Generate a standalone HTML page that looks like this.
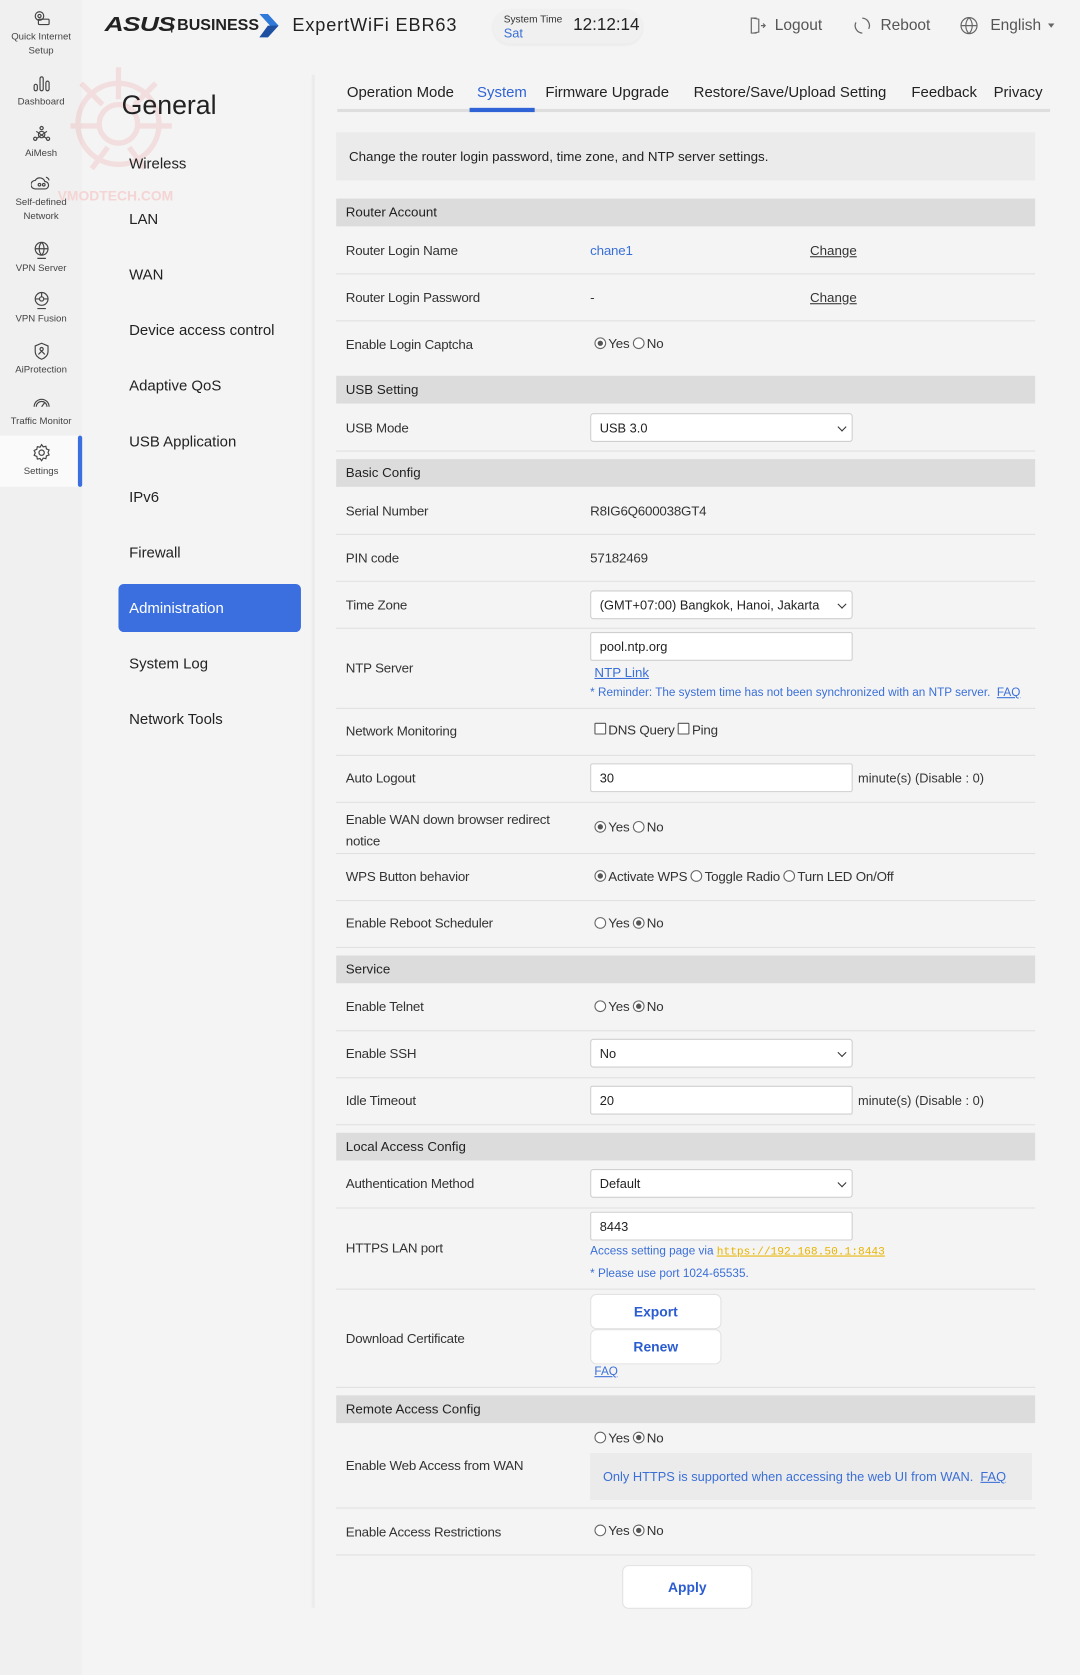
<!DOCTYPE html>
<html><head><meta charset="utf-8">
<style>
html,body{margin:0;padding:0;width:1080px;height:1674px;overflow:hidden;background:#f4f4f4;}
#w{position:absolute;left:0;top:0;width:1012px;height:1569px;transform:scale(1.0672,1.0676);transform-origin:0 0;font-family:"Liberation Sans",sans-serif;color:#333;background:#f4f4f4;}
.a{position:absolute;white-space:nowrap;}
.side{position:absolute;left:0;top:0;width:77px;height:1569px;background:#f0f0f0;}
.si{position:absolute;left:0;width:77px;text-align:center;font-size:9px;color:#444;line-height:13px;}
.si svg{display:block;margin:0 auto 2px;}
.menu{position:absolute;left:121px;font-size:14px;color:#222;}
.lbl{position:absolute;left:324px;font-size:12.5px;color:#333;letter-spacing:-0.2px;}
.val{position:absolute;left:553px;font-size:12.5px;color:#333;letter-spacing:-0.2px;}
.sep{position:absolute;left:315px;width:655px;height:1px;background:#e0e0e0;}
.hdr{position:absolute;left:315px;width:655px;height:26px;background:#dcdcdc;font-size:12.5px;color:#222;line-height:26px;text-indent:9px;}
.inp{position:absolute;left:553px;width:246px;height:27px;background:#fff;border:1px solid #cfcfcf;border-radius:2px;font-size:12px;line-height:27px;text-indent:8px;color:#222;box-sizing:border-box;}
.sel{border-radius:3px;}
.sel:after{content:"";position:absolute;right:6px;top:9px;width:5px;height:5px;border-right:1.6px solid #333;border-bottom:1.6px solid #333;transform:rotate(45deg);}
.r{display:inline-block;width:9px;height:9px;border:1px solid #666;border-radius:50%;vertical-align:-1px;margin-right:2px;position:relative;background:#fff;}
.r.c:after{content:"";position:absolute;left:2px;top:2px;width:5px;height:5px;border-radius:50%;background:#555;}
.cb{display:inline-block;width:9px;height:9px;border:1px solid #555;border-radius:1px;vertical-align:0px;margin-right:2px;background:#fff;}
.blue{color:#3a6fd8;}
.btn{position:absolute;background:#fff;border:1px solid #e2e2e2;border-radius:6px;text-align:center;color:#2b5cd0;font-weight:bold;font-size:13px;}
</style></head><body><div id="w">

<div class="side"></div>
<div class="a" style="left:0;top:408px;width:73px;height:48px;background:#fafafa"></div>
<div class="a" style="left:73px;top:408px;width:4px;height:48px;background:#3b6fe0;border-radius:2px"></div>

<div class="si" style="top:8px"><svg width="18" height="18" viewBox="0 0 18 18" fill="none" stroke="#444" stroke-width="1.1"><circle cx="7" cy="7" r="4"/><circle cx="7" cy="7" r="1.5"/><rect x="6" y="10" width="10" height="5" rx="1"/></svg>Quick Internet<br>Setup</div>
<div class="si" style="top:69px"><svg width="18" height="18" viewBox="0 0 18 18" fill="none" stroke="#444" stroke-width="1.1"><rect x="2" y="10" width="3" height="6" rx="1.5"/><rect x="7.5" y="3" width="3" height="13" rx="1.5"/><rect x="13" y="7" width="3" height="9" rx="1.5"/></svg>Dashboard</div>
<div class="si" style="top:117px"><svg width="18" height="18" viewBox="0 0 18 18" fill="none" stroke="#444" stroke-width="1.1"><circle cx="9" cy="9" r="3"/><circle cx="9" cy="3" r="1.5"/><circle cx="3" cy="13" r="1.5"/><circle cx="15" cy="13" r="1.5"/><path d="M4 6l10 7M14 6L4 13"/></svg>AiMesh</div>
<div class="si" style="top:163px"><svg width="20" height="18" viewBox="0 0 20 18" fill="none" stroke="#444" stroke-width="1.1"><path d="M4 14a4 4 0 010-8 5 5 0 019 1 3.5 3.5 0 010 7z"/><circle cx="8" cy="10" r="1.2"/><circle cx="12" cy="10" r="1.2"/><path d="M14 3a4 4 0 013 3"/></svg>Self-defined<br>Network</div>
<div class="si" style="top:225px"><svg width="18" height="18" viewBox="0 0 18 18" fill="none" stroke="#444" stroke-width="1.1"><circle cx="9" cy="8" r="6"/><path d="M3 8h12M9 2c-3 3-3 9 0 12M9 2c3 3 3 9 0 12M5 17h8"/></svg>VPN Server</div>
<div class="si" style="top:272px"><svg width="18" height="18" viewBox="0 0 18 18" fill="none" stroke="#444" stroke-width="1.1"><circle cx="9" cy="8" r="6"/><circle cx="9" cy="8" r="2"/><path d="M3 8h4M11 8h4M9 2v4M5 17h8"/></svg>VPN Fusion</div>
<div class="si" style="top:320px"><svg width="18" height="18" viewBox="0 0 18 18" fill="none" stroke="#444" stroke-width="1.1"><path d="M9 1.5l6 2.5v5c0 4-3 6.5-6 7.5-3-1-6-3.5-6-7.5V4z"/><circle cx="9" cy="7" r="1.5"/><path d="M6 12l3-3 3 3"/></svg>AiProtection</div>
<div class="si" style="top:368px"><svg width="18" height="18" viewBox="0 0 18 18" fill="none" stroke="#444" stroke-width="1.1"><path d="M2 13a7 7 0 0114 0"/><path d="M4 13a5 5 0 0110 0M9 13l3-4"/></svg>Traffic Monitor</div>
<div class="si" style="top:415px"><svg width="18" height="18" viewBox="0 0 18 18" fill="none" stroke="#444" stroke-width="1.1"><circle cx="9" cy="9" r="2.5"/><path d="M9 1.5l1.5 2 2.5-.5.5 2.5 2.5 1-1 2.3 1 2.3-2.5 1-.5 2.5-2.5-.5L9 16.5l-1.5-2-2.5.5-.5-2.5-2.5-1 1-2.3-1-2.3 2.5-1 .5-2.5 2.5.5z"/></svg>Settings</div>

<!-- header -->
<div class="a" style="left:98px;top:13px;font-size:19px;font-weight:bold;font-style:italic;color:#222;letter-spacing:-0.5px;transform:scaleX(1.3);transform-origin:0 0">ASUS</div>
<div class="a" style="left:159px;top:14px;font-size:15px;color:#222">|</div>
<div class="a" style="left:166px;top:15px;font-size:15px;font-weight:bold;color:#222">BUSINESS</div>
<svg class="a" style="left:243px;top:13px" width="18" height="22" viewBox="0 0 18 22"><path d="M0 0h8l10 11-10 11H0l10-11z" fill="#2f7ad8"/><path d="M8 11h10L8 22H0z" fill="#1f4fa0"/></svg>
<div class="a" style="left:274px;top:14px;font-size:17px;color:#222;letter-spacing:0.8px">ExpertWiFi EBR63</div>
<div class="a" style="left:462px;top:9px;width:140px;height:32px;border-radius:16px;background:#f0f0f0;box-shadow:0 1px 3px rgba(0,0,0,.06)"></div>
<div class="a" style="left:472px;top:13px;font-size:9.5px;color:#333">System Time</div>
<div class="a" style="left:472px;top:24px;font-size:12px;color:#3a6fd8">Sat</div>
<div class="a" style="left:537px;top:15px;font-size:16px;color:#222">12:12:14</div>
<svg class="a" style="left:702px;top:15px" width="16" height="18" viewBox="0 0 16 18" fill="none" stroke="#666" stroke-width="1.1"><path d="M7 2H2v14h5M4 2l5 1v12l-5 1M11 9h4M13 7l2 2-2 2"/></svg>
<div class="a" style="left:726px;top:16px;font-size:14.5px;color:#555">Logout</div>
<svg class="a" style="left:799px;top:15px" width="18" height="18" viewBox="0 0 18 18" fill="none" stroke="#666" stroke-width="1.2"><path d="M9 2a7 7 0 016 10M9 16A7 7 0 013 6"/></svg>
<div class="a" style="left:825px;top:16px;font-size:14.5px;color:#555">Reboot</div>
<svg class="a" style="left:899px;top:15px" width="18" height="18" viewBox="0 0 18 18" fill="none" stroke="#666" stroke-width="1.1"><circle cx="9" cy="9" r="7.5"/><path d="M1.5 9h15M9 1.5c-4 4-4 11 0 15M9 1.5c4 4 4 11 0 15"/></svg>
<div class="a" style="left:928px;top:16px;font-size:14.5px;color:#555">English</div>
<div class="a" style="left:982px;top:22px;width:0;height:0;border-left:3.5px solid transparent;border-right:3.5px solid transparent;border-top:4px solid #666"></div>

<!-- watermark -->
<svg class="a" style="left:56px;top:58px;opacity:.2" width="120" height="125" viewBox="0 0 120 125" fill="none" stroke="#e88" stroke-width="5"><circle cx="55" cy="58" r="38"/><circle cx="55" cy="58" r="18"/><path d="M55 5v30M20 20l20 20M90 20L70 40M10 60h25M75 60h30M30 100l15-20M80 100L65 80"/></svg>
<div class="a" style="left:54px;top:176px;font-size:13px;font-weight:bold;color:#f5d4d4">VMODTECH.COM</div>

<!-- left menu -->
<div class="a" style="left:114px;top:85px;font-size:25px;color:#222">General</div>
<div class="menu" style="top:145px">Wireless</div>
<div class="menu" style="top:197px">LAN</div>
<div class="menu" style="top:249px">WAN</div>
<div class="menu" style="top:301px">Device access control</div>
<div class="menu" style="top:353px">Adaptive QoS</div>
<div class="menu" style="top:405px">USB Application</div>
<div class="menu" style="top:457px">IPv6</div>
<div class="menu" style="top:509px">Firewall</div>
<div class="a" style="left:111px;top:547px;width:171px;height:45px;background:#3b6fe0;border-radius:5px"></div>
<div class="menu" style="top:561px;color:#fff">Administration</div>
<div class="menu" style="top:613px">System Log</div>
<div class="menu" style="top:665px">Network Tools</div>
<div class="a" style="left:292px;top:70px;width:3px;height:1436px;background:#ececec"></div>

<!-- tabs -->
<div class="a" style="left:325px;top:78px;font-size:14px;color:#222">Operation Mode</div>
<div class="a" style="left:447px;top:78px;font-size:14px;color:#2f63d6">System</div>
<div class="a" style="left:511px;top:78px;font-size:14px;color:#222">Firmware Upgrade</div>
<div class="a" style="left:650px;top:78px;font-size:14px;color:#222">Restore/Save/Upload Setting</div>
<div class="a" style="left:854px;top:78px;font-size:14px;color:#222">Feedback</div>
<div class="a" style="left:931px;top:78px;font-size:14px;color:#222">Privacy</div>
<div class="a" style="left:316px;top:102px;width:668px;height:3px;background:#dedede"></div>
<div class="a" style="left:440px;top:101px;width:61px;height:4px;background:#2f63d6"></div>

<div class="a" style="left:315px;top:124px;width:655px;height:45px;background:#ebebeb"></div>
<div class="a" style="left:327px;top:140px;font-size:12.5px;color:#222">Change the router login password, time zone, and NTP server settings.</div>

<div class="hdr" style="top:186px">Router Account</div>
<div class="lbl" style="top:228px">Router Login Name</div><div class="val blue" style="top:228px">chane1</div><div class="a" style="left:759px;top:228px;font-size:12.5px;text-decoration:underline">Change</div>
<div class="sep" style="top:256px"></div>
<div class="lbl" style="top:272px">Router Login Password</div><div class="val" style="top:272px">-</div><div class="a" style="left:759px;top:272px;font-size:12.5px;text-decoration:underline">Change</div>
<div class="sep" style="top:300px"></div>
<div class="lbl" style="top:316px">Enable Login Captcha</div><div class="val" style="top:315px;left:557px"><span class="r c"></span>Yes <span class="r"></span>No</div>

<div class="hdr" style="top:352px">USB Setting</div>
<div class="lbl" style="top:394px">USB Mode</div><div class="inp sel" style="top:387px">USB 3.0</div>
<div class="sep" style="top:422px"></div>

<div class="hdr" style="top:430px">Basic Config</div>
<div class="lbl" style="top:472px">Serial Number</div><div class="val" style="top:472px">R8IG6Q600038GT4</div>
<div class="sep" style="top:500px"></div>
<div class="lbl" style="top:516px">PIN code</div><div class="val" style="top:516px">57182469</div>
<div class="sep" style="top:544px"></div>
<div class="lbl" style="top:560px">Time Zone</div><div class="inp sel" style="top:553px">(GMT+07:00) Bangkok, Hanoi, Jakarta</div>
<div class="sep" style="top:588px"></div>
<div class="lbl" style="top:619px">NTP Server</div><div class="inp" style="top:592px">pool.ntp.org</div>
<div class="a blue" style="left:557px;top:623px;font-size:12.5px;text-decoration:underline">NTP Link</div>
<div class="a blue" style="left:553px;top:643px;font-size:11px">* Reminder: The system time has not been synchronized with an NTP server. &nbsp;<u>FAQ</u></div>
<div class="sep" style="top:663px"></div>
<div class="lbl" style="top:678px">Network Monitoring</div><div class="val" style="top:677px;left:557px"><span class="cb"></span>DNS Query <span class="cb"></span>Ping</div>
<div class="sep" style="top:707px"></div>
<div class="lbl" style="top:722px">Auto Logout</div><div class="inp" style="top:715px">30</div><div class="a" style="left:804px;top:722px;font-size:12px">minute(s) (Disable : 0)</div>
<div class="sep" style="top:751px"></div>
<div class="lbl" style="top:758px;line-height:20px">Enable WAN down browser redirect<br>notice</div><div class="val" style="top:768px;left:557px"><span class="r c"></span>Yes <span class="r"></span>No</div>
<div class="sep" style="top:799px"></div>
<div class="lbl" style="top:814px">WPS Button behavior</div><div class="val" style="top:814px;left:557px"><span class="r c"></span>Activate WPS <span class="r"></span>Toggle Radio <span class="r"></span>Turn LED On/Off</div>
<div class="sep" style="top:843px"></div>
<div class="lbl" style="top:858px">Enable Reboot Scheduler</div><div class="val" style="top:858px;left:557px"><span class="r"></span>Yes <span class="r c"></span>No</div>
<div class="sep" style="top:887px"></div>

<div class="hdr" style="top:895px">Service</div>
<div class="lbl" style="top:936px">Enable Telnet</div><div class="val" style="top:936px;left:557px"><span class="r"></span>Yes <span class="r c"></span>No</div>
<div class="sep" style="top:965px"></div>
<div class="lbl" style="top:980px">Enable SSH</div><div class="inp sel" style="top:973px">No</div>
<div class="sep" style="top:1009px"></div>
<div class="lbl" style="top:1024px">Idle Timeout</div><div class="inp" style="top:1017px">20</div><div class="a" style="left:804px;top:1024px;font-size:12px">minute(s) (Disable : 0)</div>
<div class="sep" style="top:1053px"></div>

<div class="hdr" style="top:1061px">Local Access Config</div>
<div class="lbl" style="top:1102px">Authentication Method</div><div class="inp sel" style="top:1095px">Default</div>
<div class="sep" style="top:1131px"></div>
<div class="lbl" style="top:1162px">HTTPS LAN port</div><div class="inp" style="top:1135px">8443</div>
<div class="a blue" style="left:553px;top:1166px;font-size:11px">Access setting page via <span style="color:#e8b400;text-decoration:underline;font-family:'Liberation Mono',monospace;font-size:10.5px">https://192.168.50.1:8443</span></div>
<div class="a blue" style="left:553px;top:1187px;font-size:11px">* Please use port 1024-65535.</div>
<div class="sep" style="top:1207px"></div>
<div class="lbl" style="top:1247px">Download Certificate</div>
<div class="btn" style="left:553px;top:1212px;width:121px;height:31px;line-height:31px">Export</div>
<div class="btn" style="left:553px;top:1245px;width:121px;height:31px;line-height:31px">Renew</div>
<div class="a blue" style="left:557px;top:1279px;font-size:11px;text-decoration:underline">FAQ</div>
<div class="sep" style="top:1299px"></div>

<div class="hdr" style="top:1307px">Remote Access Config</div>
<div class="val" style="top:1340px;left:557px"><span class="r"></span>Yes <span class="r c"></span>No</div>
<div class="lbl" style="top:1366px">Enable Web Access from WAN</div>
<div class="a" style="left:553px;top:1361px;width:414px;height:44px;background:#ebebeb"></div>
<div class="a blue" style="left:565px;top:1376px;font-size:12px">Only HTTPS is supported when accessing the web UI from WAN. &nbsp;<u>FAQ</u></div>
<div class="sep" style="top:1412px"></div>
<div class="lbl" style="top:1428px">Enable Access Restrictions</div><div class="val" style="top:1427px;left:557px"><span class="r"></span>Yes <span class="r c"></span>No</div>
<div class="sep" style="top:1456px"></div>
<div class="btn" style="left:583px;top:1466px;width:120px;height:39px;line-height:39px">Apply</div>

</div></body></html>
